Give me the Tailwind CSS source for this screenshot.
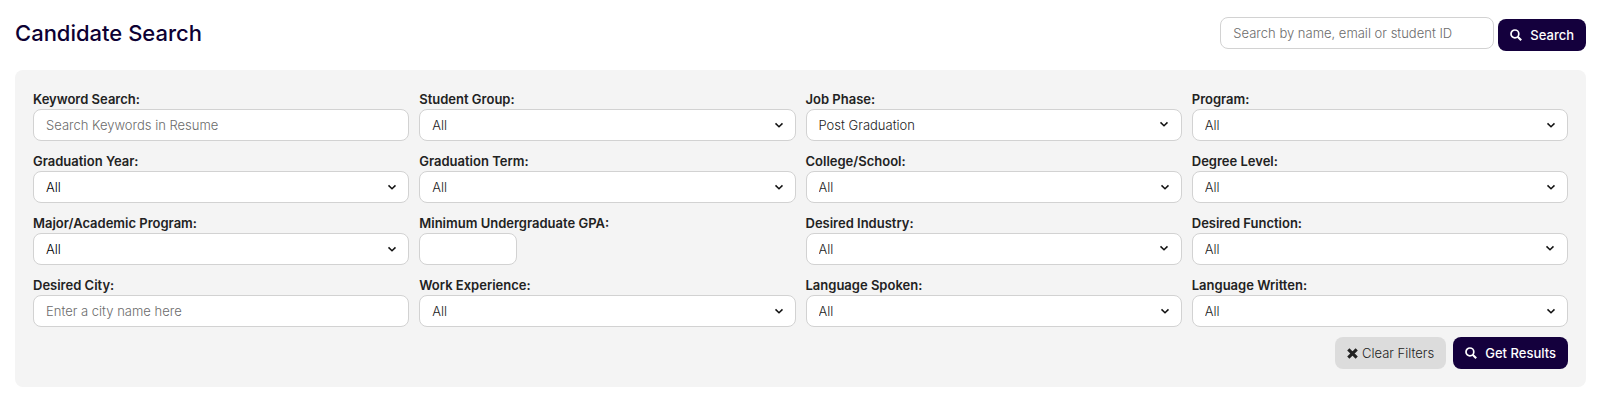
<!DOCTYPE html>
<html lang="en">
<head>
    <meta charset="UTF-8">
    <meta name="viewport" content="width=device-width, initial-scale=1.0">
    <title>Candidate Search</title>
    <script src="https://cdn.jsdelivr.net/npm/@tailwindcss/browser@4"></script>
</head>
<body class="bg-white font-['Inter',sans-serif] text-[13px] leading-5 font-light text-[#222]">
    <!-- icons -->
    <svg class="hidden" aria-hidden="true">
        <symbol id="icon-chevron" viewBox="0 0 10 10">
            <path d="M1.500 3.400 5 6.700 8.500 3.400" fill="none" stroke="#111" stroke-width="1.500"/>
        </symbol>
        <symbol id="icon-search" viewBox="0 0 12 12">
            <circle cx="4.900" cy="4.900" r="3.900" fill="none" stroke="currentColor" stroke-width="1.700"/>
            <path d="M7.700 7.700 11.200 11.200" fill="none" stroke="currentColor" stroke-width="2.100"/>
        </symbol>
        <symbol id="icon-remove" viewBox="0 0 11 11">
            <path d="M1.300 1.300 9.700 9.700M9.700 1.300 1.300 9.700" fill="none" stroke="currentColor" stroke-width="3.100"/>
        </symbol>
    </svg>

    <div class="pt-[17px] pr-[14px] pb-5 pl-[15px]">
        <header class="flex items-start justify-between pb-[19px]">
            <h1 class="text-[22px] leading-8 font-medium text-[#0d0033]">Candidate Search</h1>
            <form class="flex items-start gap-1">
                <input type="text" aria-label="Search by name, email or student ID" placeholder="Search by name, email or student ID" class="h-8 w-[274px] rounded-lg border border-[#d2d2d2] bg-white px-3 placeholder:text-[#6b6b6b]">
                <button type="button" class="mt-[2px] flex h-8 items-center gap-2 rounded-lg bg-[#14003d] px-3 font-medium text-white">
                    <svg class="size-3" aria-hidden="true"><use href="#icon-search"/></svg>
                    Search
                </button>
            </form>
        </header>

        <form class="rounded-lg bg-[#f4f4f4] px-[18px] pt-[19px] pb-[18px]">
            <div class="grid grid-cols-4 gap-[10px]">
                <div>
                    <label for="keyword" class="block font-semibold">Keyword Search:</label>
                    <input id="keyword" type="text" placeholder="Search Keywords in Resume" class="h-8 w-full rounded-lg border border-[#d2d2d2] bg-white px-3 placeholder:text-[#6b6b6b]">
                </div>
                <div>
                    <label for="student-group" class="block font-semibold">Student Group:</label>
                    <div class="relative">
                        <select id="student-group" class="h-8 w-full appearance-none rounded-lg border border-[#d2d2d2] bg-white px-3"><option>All</option></select>
                        <svg class="pointer-events-none absolute top-[11px] right-3 size-[10px]" aria-hidden="true"><use href="#icon-chevron"/></svg>
                    </div>
                </div>
                <div>
                    <label for="job-phase" class="block font-semibold">Job Phase:</label>
                    <div class="relative">
                        <select id="job-phase" class="h-8 w-full appearance-none rounded-lg border border-[#d2d2d2] bg-white px-3"><option>Post Graduation</option></select>
                        <svg class="pointer-events-none absolute top-[10px] right-[13px] size-[10px]" aria-hidden="true"><use href="#icon-chevron"/></svg>
                    </div>
                </div>
                <div>
                    <label for="program" class="block font-semibold">Program:</label>
                    <div class="relative">
                        <select id="program" class="h-8 w-full appearance-none rounded-lg border border-[#d2d2d2] bg-white px-3"><option>All</option></select>
                        <svg class="pointer-events-none absolute top-[11px] right-3 size-[10px]" aria-hidden="true"><use href="#icon-chevron"/></svg>
                    </div>
                </div>

                <div>
                    <label for="graduation-year" class="block font-semibold">Graduation Year:</label>
                    <div class="relative">
                        <select id="graduation-year" class="h-8 w-full appearance-none rounded-lg border border-[#d2d2d2] bg-white px-3 text-black"><option>All</option></select>
                        <svg class="pointer-events-none absolute top-[11px] right-3 size-[10px]" aria-hidden="true"><use href="#icon-chevron"/></svg>
                    </div>
                </div>
                <div>
                    <label for="graduation-term" class="block font-semibold">Graduation Term:</label>
                    <div class="relative">
                        <select id="graduation-term" class="h-8 w-full appearance-none rounded-lg border border-[#d2d2d2] bg-white px-3"><option>All</option></select>
                        <svg class="pointer-events-none absolute top-[11px] right-3 size-[10px]" aria-hidden="true"><use href="#icon-chevron"/></svg>
                    </div>
                </div>
                <div>
                    <label for="college" class="block font-semibold">College/School:</label>
                    <div class="relative">
                        <select id="college" class="h-8 w-full appearance-none rounded-lg border border-[#d2d2d2] bg-white px-3"><option>All</option></select>
                        <svg class="pointer-events-none absolute top-[11px] right-3 size-[10px]" aria-hidden="true"><use href="#icon-chevron"/></svg>
                    </div>
                </div>
                <div>
                    <label for="degree-level" class="block font-semibold">Degree Level:</label>
                    <div class="relative">
                        <select id="degree-level" class="h-8 w-full appearance-none rounded-lg border border-[#d2d2d2] bg-white px-3"><option>All</option></select>
                        <svg class="pointer-events-none absolute top-[11px] right-3 size-[10px]" aria-hidden="true"><use href="#icon-chevron"/></svg>
                    </div>
                </div>

                <div>
                    <label for="major" class="block font-semibold">Major/Academic Program:</label>
                    <div class="relative">
                        <select id="major" class="h-8 w-full appearance-none rounded-lg border border-[#d2d2d2] bg-white px-3 text-black"><option>All</option></select>
                        <svg class="pointer-events-none absolute top-[11px] right-3 size-[10px]" aria-hidden="true"><use href="#icon-chevron"/></svg>
                    </div>
                </div>
                <div>
                    <label for="gpa" class="block font-semibold">Minimum Undergraduate GPA:</label>
                    <input id="gpa" type="text" class="h-8 w-[98px] rounded-lg border border-[#d2d2d2] bg-white px-3">
                </div>
                <div>
                    <label for="industry" class="block font-semibold">Desired Industry:</label>
                    <div class="relative">
                        <select id="industry" class="h-8 w-full appearance-none rounded-lg border border-[#d2d2d2] bg-white px-3"><option>All</option></select>
                        <svg class="pointer-events-none absolute top-[10px] right-[13px] size-[10px]" aria-hidden="true"><use href="#icon-chevron"/></svg>
                    </div>
                </div>
                <div>
                    <label for="function" class="block font-semibold">Desired Function:</label>
                    <div class="relative">
                        <select id="function" class="h-8 w-full appearance-none rounded-lg border border-[#d2d2d2] bg-white px-3"><option>All</option></select>
                        <svg class="pointer-events-none absolute top-[10px] right-[13px] size-[10px]" aria-hidden="true"><use href="#icon-chevron"/></svg>
                    </div>
                </div>

                <div>
                    <label for="city" class="block font-semibold">Desired City:</label>
                    <input id="city" type="text" placeholder="Enter a city name here" class="h-8 w-full rounded-lg border border-[#d2d2d2] bg-white px-3 placeholder:text-[#6b6b6b]">
                </div>
                <div>
                    <label for="work-experience" class="block font-semibold">Work Experience:</label>
                    <div class="relative">
                        <select id="work-experience" class="h-8 w-full appearance-none rounded-lg border border-[#d2d2d2] bg-white px-3"><option>All</option></select>
                        <svg class="pointer-events-none absolute top-[11px] right-3 size-[10px]" aria-hidden="true"><use href="#icon-chevron"/></svg>
                    </div>
                </div>
                <div>
                    <label for="language-spoken" class="block font-semibold">Language Spoken:</label>
                    <div class="relative">
                        <select id="language-spoken" class="h-8 w-full appearance-none rounded-lg border border-[#d2d2d2] bg-white px-3"><option>All</option></select>
                        <svg class="pointer-events-none absolute top-[11px] right-3 size-[10px]" aria-hidden="true"><use href="#icon-chevron"/></svg>
                    </div>
                </div>
                <div>
                    <label for="language-written" class="block font-semibold">Language Written:</label>
                    <div class="relative">
                        <select id="language-written" class="h-8 w-full appearance-none rounded-lg border border-[#d2d2d2] bg-white px-3"><option>All</option></select>
                        <svg class="pointer-events-none absolute top-[11px] right-3 size-[10px]" aria-hidden="true"><use href="#icon-chevron"/></svg>
                    </div>
                </div>
            </div>

            <div class="mt-[10px] flex justify-end gap-[7px]">
                <button type="reset" class="flex h-8 items-center gap-1 rounded-lg bg-[#dcdcdc] px-3">
                    <svg class="size-[11px]" aria-hidden="true"><use href="#icon-remove"/></svg>
                    Clear Filters
                </button>
                <button type="button" class="flex h-8 items-center gap-2 rounded-lg bg-[#14003d] px-3 font-medium text-white">
                    <svg class="size-3" aria-hidden="true"><use href="#icon-search"/></svg>
                    Get Results
                </button>
            </div>
        </form>
    </div>
</body>
</html>
